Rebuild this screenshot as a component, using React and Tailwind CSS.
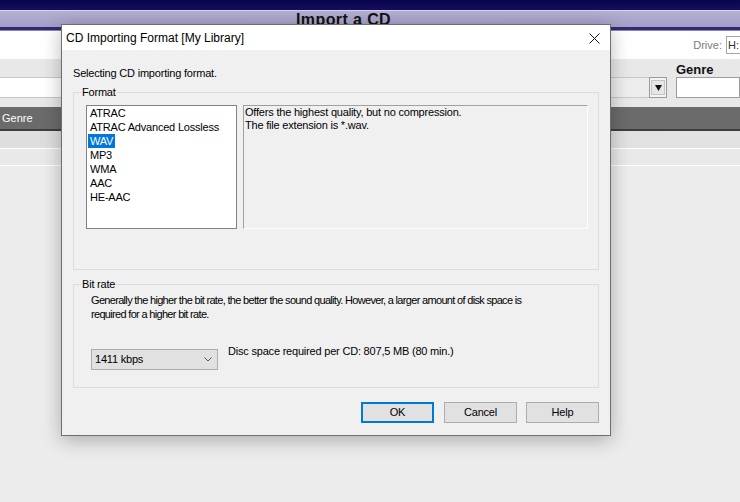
import React from 'react';

const sans = "font-['Liberation_Sans',Arial,sans-serif]";

const formats = ['ATRAC', 'ATRAC Advanced Lossless', 'WAV', 'MP3', 'WMA', 'AAC', 'HE-AAC'];

// Library window sitting behind the dialog
const LibraryBackdrop = () => (
  <div className="flex flex-col">
    <div className="h-[10px] bg-gradient-to-b from-[#0a044c] to-[#15105e]" />
    <div className="h-px bg-[#d9d6ec]" />
    <div className="h-[16px] bg-gradient-to-b from-[#b4afd4] to-[#a39ec6] overflow-hidden">
      <span className={`${sans} block pl-[296px] text-[16px] font-bold leading-[18px] tracking-[0.4px] text-[#111]`}>Import a CD</span>
    </div>
    <div className="h-[3px] bg-[#302a74]" />
    <div className="h-px bg-[#8a86b6]" />
    <div className="h-[28px] bg-white flex items-center justify-end">
      <span className={`${sans} text-[11px] text-[#7c7c7c] mr-[4px]`}>Drive:</span>
      <div className={`${sans} h-[18px] w-[20px] border border-[#a5a5a5] text-[11px] leading-[16px] pl-[1px] text-[#333] -mr-[6px]`}>H:</div>
    </div>
    <div className="h-[48px] bg-[#e8e8e8] flex items-end pb-[9px]">
      <div className="w-[650px] h-[21px] bg-gradient-to-r from-white via-white to-[#ececec] border-y border-[#c8c8c8]" />
      <div className="w-[18px] h-[21px] border border-[#9a9a9a] bg-[#f4f4f4] flex items-center justify-center">
        <div className="h-[15px] w-[14px] border border-[#c4c4c4] bg-[#e6e6e6] flex items-center justify-center">
          <svg width="7" height="6" viewBox="0 0 7 6"><path d="M0 0h7L3.5 6z" fill="#111" /></svg>
        </div>
      </div>
      <div className="ml-[9px] flex flex-col">
        <span className={`${sans} text-[13px] font-bold leading-[17px] text-[#111] -mb-[1px]`}>Genre</span>
        <div className="w-[64px] h-[21px] bg-white border border-[#9c9c9c]" />
      </div>
    </div>
    <div className="h-[22px] bg-[#6b6b6b] flex items-center">
      <span className={`${sans} text-[11px] text-white pl-[2px]`}>Genre</span>
    </div>
    <div className="h-[2px] bg-[#3e3e3e]" />
    <div className="h-[17px] bg-gradient-to-r from-[#dedede] to-[#e2e2e2]" />
    <div className="h-px bg-white" />
    <div className="h-[16px] bg-[#e9e9e9]" />
    <div className="h-px bg-white" />
  </div>
);

const Button = ({ children, primary }) => (
  <div
    className={`${sans} h-[21px] w-[73px] flex items-center justify-center text-[11px] text-black bg-[#e1e1e1] ${
      primary ? 'border-2 border-[#0078d7]' : 'border border-[#adadad]'
    }`}
  >
    {children}
  </div>
);

const FormatDialog = () => (
  <div className="absolute left-[61px] top-[24px] w-[550px] h-[412px] border border-[#6e6e6e] bg-[#f0f0f0] shadow-[0_4px_18px_rgba(0,0,0,0.28)] flex flex-col">
    {/* title bar */}
    <div className="h-[25px] bg-white flex items-center justify-between pl-[4px] pr-[10px]">
      <span className={`${sans} text-[12px] text-black`}>CD Importing Format [My Library]</span>
      <svg width="11" height="11" viewBox="0 0 11 11" className="mt-[1px]">
        <path d="M0.5 0.5l10 10M10.5 0.5l-10 10" stroke="#111" strokeWidth="1" />
      </svg>
    </div>

    <div className={`${sans} flex-1 px-[11px] pt-[17px] text-[11px] tracking-[-0.2px] text-black`}>
      <p className="leading-[13px]">Selecting CD importing format.</p>

      <fieldset className="mt-[6px] h-[184px] border border-[#dcdcdc]">
        <legend className="ml-[7px] px-[1px] leading-[13px]">Format</legend>
        <div className="flex pl-[12px] pt-[6px] gap-[6px]">
          <div className="w-[151px] h-[124px] bg-white border border-[#828282] px-[1px]">
            {formats.map((f) => (
              <div key={f} className="h-[14px] leading-[14px]">
                <span className={`inline-block px-[2px] ${f === 'WAV' ? 'bg-[#0078d7] text-white' : ''}`}>{f}</span>
              </div>
            ))}
          </div>
          <div className="w-[345px] h-[124px] border-t border-l border-[#a0a0a0] border-b-white border-r-white border-b border-r pl-[1px] leading-[13px]">
            <p>Offers the highest quality, but no compression.</p>
            <p>The file extension is *.wav.</p>
          </div>
        </div>
      </fieldset>

      <fieldset className="mt-[8px] border border-[#dcdcdc] pb-[17px]">
        <legend className="ml-[7px] px-[1px] leading-[13px]">Bit rate</legend>
        <p className="mt-[2px] pl-[17px] leading-[14px] tracking-[-0.68px]">
          Generally the higher the bit rate, the better the sound quality. However, a larger amount of disk space is
          <br />
          required for a higher bit rate.
        </p>
        <div className="mt-[24px] pl-[17px] flex items-start">
          <div className="mt-[4px] w-[127px] h-[21px] bg-[#e1e1e1] border border-[#adadad] flex items-center justify-between pl-[3px] pr-[5px]">
            <span>1411 kbps</span>
            <svg width="8" height="5" viewBox="0 0 8 5"><path d="M0.5 0.5L4 4l3.5-3.5" fill="none" stroke="#555" strokeWidth="1" /></svg>
          </div>
          <span className="ml-[10px] leading-[13px]">Disc space required per CD: 807,5 MB (80 min.)</span>
        </div>
      </fieldset>

      <div className="mt-[14px] flex justify-end gap-[9px]">
        <div className="mr-[1px]"><Button primary>OK</Button></div>
        <Button>Cancel</Button>
        <Button>Help</Button>
      </div>
    </div>
  </div>
);

export default function App() {
  return (
    <div className="relative w-[740px] h-[502px] overflow-hidden bg-[#ececec]">
      <LibraryBackdrop />
      <FormatDialog />
    </div>
  );
}
